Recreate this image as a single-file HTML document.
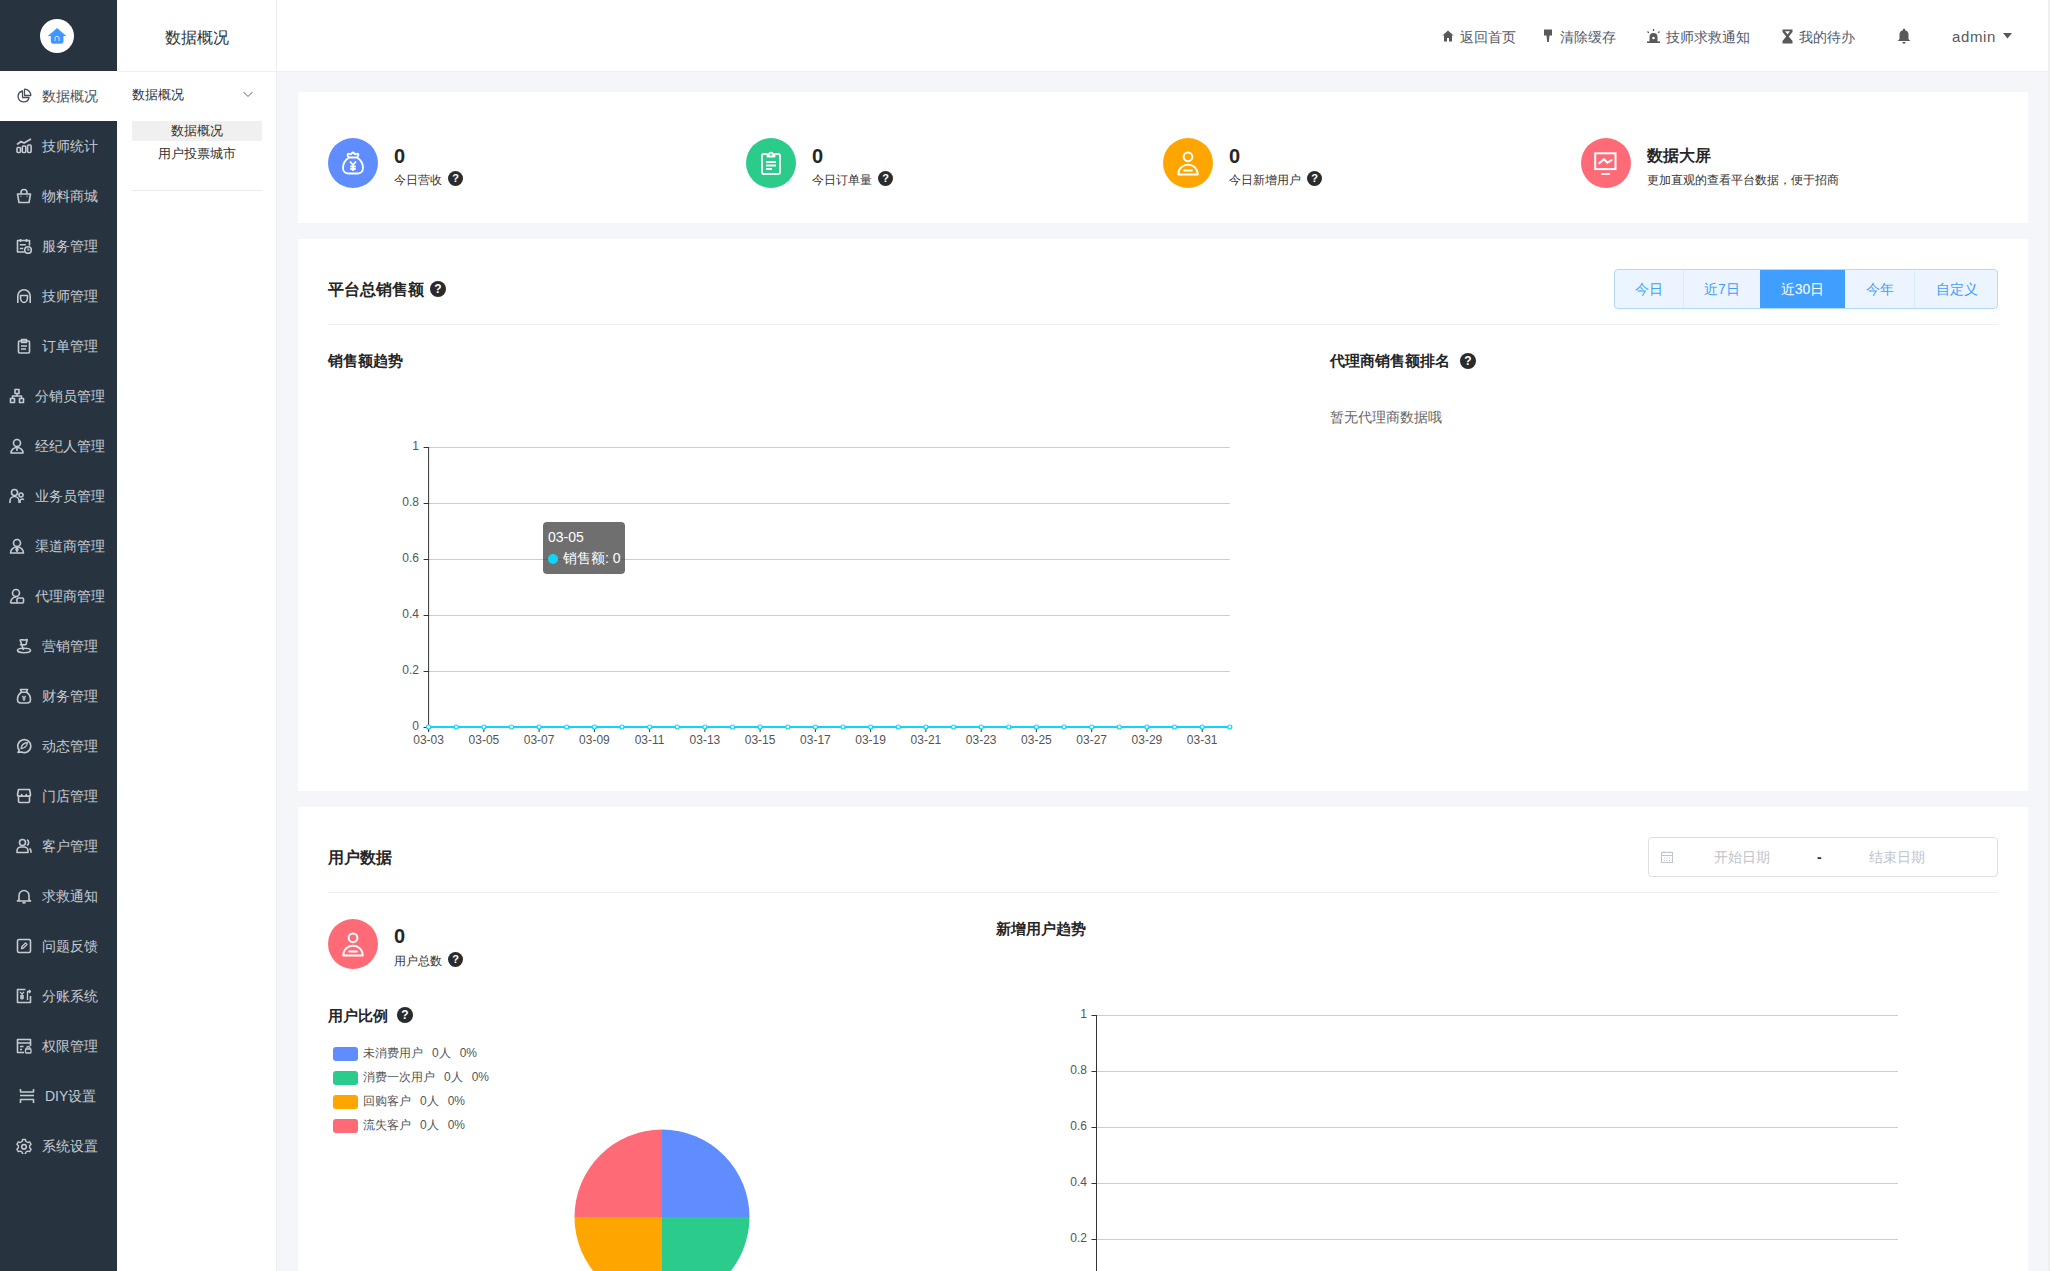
<!DOCTYPE html>
<html><head><meta charset="utf-8">
<style>
*{margin:0;padding:0;box-sizing:border-box}
html,body{width:2050px;height:1271px;overflow:hidden}
body{font-family:"Liberation Sans",sans-serif;background:#f5f6f9;position:relative;color:#303133}
.abs{position:absolute}
#side{left:0;top:0;width:117px;height:1271px;background:#273440}
#logo{left:40px;top:19px;width:34px;height:34px;border-radius:50%;background:#fff}
.mi{position:absolute;left:0;width:117px;height:50px;color:#c6cad1;font-size:14px;line-height:50px;white-space:nowrap}
.mi svg{position:absolute;top:17px;width:16px;height:16px}
.mi span{position:absolute;top:0}
.mi.on{background:#fff;color:#4a4f57}
#sub{left:117px;top:0;width:160px;height:1271px;background:#fff;border-right:1px solid #ededed}
#hdr{left:277px;top:0;width:1773px;height:72px;background:#fff;border-bottom:1px solid #efefef}
.card{position:absolute;left:298px;width:1730px;background:#fff}
.hi{position:absolute;top:28px;font-size:14px;color:#515a6e;line-height:18px;white-space:nowrap}
.hi svg{position:absolute}
.q{position:absolute;width:15px;height:15px;border-radius:50%;background:#2b2b2b;color:#fff;font-size:11px;font-weight:bold;line-height:15px;text-align:center}
.circ{position:absolute;width:50px;height:50px;border-radius:50%}
.num{position:absolute;font-size:20px;font-weight:bold;color:#262626;line-height:20px}
.lab{position:absolute;font-size:12px;color:#333;line-height:14px;white-space:nowrap}
.ttl{position:absolute;font-weight:bold;color:#262626;white-space:nowrap}
.yl{position:absolute;font-size:12px;color:#555;line-height:12px;text-align:right;width:40px}
.xl{position:absolute;font-size:12px;color:#555;line-height:12px;text-align:center;width:50px}
</style></head><body>

<div id="side" class="abs">
  <div id="logo" class="abs"><svg class="abs" style="left:8px;top:9px" width="19" height="16" viewBox="0 0 19 16"><path d="M9.1 0.2 0.2 7.9H3V13.5a2 2 0 0 0 2 2H13.2a2 2 0 0 0 2-2V7.9H18Z" fill="#3d97ff" stroke="#3d97ff" stroke-width="0.4" stroke-linejoin="round"/><path d="M7.1 13V10.3a2 2 0 0 1 4 0V13" fill="none" stroke="#d6e8ff" stroke-width="1"/></svg></div>
<div class="mi on" style="top:71px"><svg style="left:16px" viewBox="0 0 16 16" fill="none" stroke="currentColor" stroke-width="1.6" stroke-linejoin="round"><path d="M6.5 3A5.5 5.5 0 1 0 13 9.5H6.5Z" stroke-width="1.3"/><path d="M8.5 1.2V7.5h6.3A6.3 6.3 0 0 0 8.5 1.2Z" stroke-width="1.3"/></svg><span style="left:42px">数据概况</span></div>
<div class="mi" style="top:121px"><svg style="left:16px" viewBox="0 0 16 16" fill="none" stroke="currentColor" stroke-width="1.6" stroke-linejoin="round"><rect x="1" y="9.5" width="3.5" height="5" rx="1"/><rect x="6.3" y="8" width="3.5" height="6.5" rx="1"/><rect x="11.6" y="7" width="3.5" height="7.5" rx="1"/><path d="M1 6.5 5 3.5l3 1.5 7-4"/></svg><span style="left:42px">技师统计</span></div>
<div class="mi" style="top:171px"><svg style="left:16px" viewBox="0 0 16 16" fill="none" stroke="currentColor" stroke-width="1.6" stroke-linejoin="round"><path d="M1.5 6h13l-1.5 8.5H3Z"/><path d="M5 6V4.5a3 3 0 0 1 6 0V6"/><path d="M4.5 8.3h.8M10.7 8.3h.8"/></svg><span style="left:42px">物料商城</span></div>
<div class="mi" style="top:221px"><svg style="left:16px" viewBox="0 0 16 16" fill="none" stroke="currentColor" stroke-width="1.6" stroke-linejoin="round"><path d="M8.5 14H1.5V2.5h12v5"/><path d="M4.5 1v3M10.5 1v3M3.8 6.8h6M3.8 10.5h3.5"/><circle cx="12" cy="12" r="3.3"/><path d="M12 10.3V12h1.6" stroke-width="1.2"/></svg><span style="left:42px">服务管理</span></div>
<div class="mi" style="top:271px"><svg style="left:16px" viewBox="0 0 16 16" fill="none" stroke="currentColor" stroke-width="1.6" stroke-linejoin="round"><path d="M1.8 15V8a6.2 6.2 0 0 1 12.4 0v7"/><path d="M4.5 7.5h7v2a3.5 5 0 0 1-7 0Z"/></svg><span style="left:42px">技师管理</span></div>
<div class="mi" style="top:321px"><svg style="left:16px" viewBox="0 0 16 16" fill="none" stroke="currentColor" stroke-width="1.6" stroke-linejoin="round"><rect x="2.5" y="3" width="11" height="12" rx="1"/><path d="M5.5 1.5h5v3h-5z"/><path d="M5 8h6M5 11h5"/></svg><span style="left:42px">订单管理</span></div>
<div class="mi" style="top:371px"><svg style="left:9px" viewBox="0 0 16 16" fill="none" stroke="currentColor" stroke-width="1.6" stroke-linejoin="round"><rect x="6" y="1.5" width="4" height="4"/><rect x="1.5" y="10.5" width="4" height="4"/><rect x="10.5" y="10.5" width="4" height="4"/><path d="M8 5.5v2.5M3.5 10.5V8h9v2.5"/></svg><span style="left:35px">分销员管理</span></div>
<div class="mi" style="top:421px"><svg style="left:9px" viewBox="0 0 16 16" fill="none" stroke="currentColor" stroke-width="1.6" stroke-linejoin="round"><circle cx="8" cy="5" r="3.5"/><path d="M2 15c0-3 2.5-5.5 6-5.5s6 2.5 6 5.5Z"/><path d="M8 10v3"/></svg><span style="left:35px">经纪人管理</span></div>
<div class="mi" style="top:471px"><svg style="left:9px" viewBox="0 0 16 16" fill="none" stroke="currentColor" stroke-width="1.6" stroke-linejoin="round"><circle cx="5.5" cy="4.5" r="3"/><path d="M1 15v-2a4.5 4.5 0 0 1 9 0v2"/><circle cx="12" cy="7" r="2"/><path d="M11 15v-2.5a3 3 0 0 1 4-1"/></svg><span style="left:35px">业务员管理</span></div>
<div class="mi" style="top:521px"><svg style="left:9px" viewBox="0 0 16 16" fill="none" stroke="currentColor" stroke-width="1.6" stroke-linejoin="round"><circle cx="8" cy="5" r="3.5"/><path d="M1.5 15c0-3.5 3-6 6.5-6s6.5 2.5 6.5 6Z"/><path d="M8 9.5l1 2-1 2-1-2z"/></svg><span style="left:35px">渠道商管理</span></div>
<div class="mi" style="top:571px"><svg style="left:9px" viewBox="0 0 16 16" fill="none" stroke="currentColor" stroke-width="1.6" stroke-linejoin="round"><circle cx="7" cy="5" r="3.5"/><path d="M1.5 15c0-3.5 2.5-6 5.5-6"/><rect x="8" y="10" width="6.5" height="5" rx="1"/><path d="M1.5 15h7"/></svg><span style="left:35px">代理商管理</span></div>
<div class="mi" style="top:621px"><svg style="left:16px" viewBox="0 0 16 16" fill="none" stroke="currentColor" stroke-width="1.6" stroke-linejoin="round"><path d="M4 1.5 7.5 12"/><path d="M4.2 2c2-1 4 1 7-0.5l-1.2 5c-2.5 1.2-4.5-.5-6 .5"/><ellipse cx="8" cy="12.5" rx="6.5" ry="2.2"/></svg><span style="left:42px">营销管理</span></div>
<div class="mi" style="top:671px"><svg style="left:16px" viewBox="0 0 16 16" fill="none" stroke="currentColor" stroke-width="1.6" stroke-linejoin="round"><path d="M5.5 4.2 4.5 1.5h7l-1 2.7"/><path d="M5.5 4.2C2.5 6 1.5 9 1.5 11.5c0 2.3 1.3 3.5 3.5 3.5h6c2.2 0 3.5-1.2 3.5-3.5 0-2.5-1-5.5-4-7.3Z"/><path d="M6.3 8l1.7 2 1.7-2M8 10v3M6.5 11h3" stroke-width="1.2"/></svg><span style="left:42px">财务管理</span></div>
<div class="mi" style="top:721px"><svg style="left:16px" viewBox="0 0 16 16" fill="none" stroke="currentColor" stroke-width="1.6" stroke-linejoin="round"><path d="M3.3 12.3A6.5 6.5 0 1 1 5.5 14L2 14.5Z"/><path d="M5 10.5C5.5 7.2 7.8 5 11.5 4.5 11 8 8.5 10.2 5 10.5Z" stroke-width="1.3"/></svg><span style="left:42px">动态管理</span></div>
<div class="mi" style="top:771px"><svg style="left:16px" viewBox="0 0 16 16" fill="none" stroke="currentColor" stroke-width="1.6" stroke-linejoin="round"><path d="M2.5 7v6.3A1.2 1.2 0 0 0 3.7 14.5h8.6a1.2 1.2 0 0 0 1.2-1.2V7"/><path d="M1.5 6.5 2.5 1.5h11l1 5c0 1-.9 1.8-2.1 1.8s-2.1-.8-2.1-1.8c0 1-.9 1.8-2.3 1.8s-2.3-.8-2.3-1.8c0 1-.9 1.8-2.1 1.8S1.5 7.5 1.5 6.5Z"/></svg><span style="left:42px">门店管理</span></div>
<div class="mi" style="top:821px"><svg style="left:16px" viewBox="0 0 16 16" fill="none" stroke="currentColor" stroke-width="1.6" stroke-linejoin="round"><circle cx="6.5" cy="4.5" r="3"/><path d="M1 14.5v-1.5c0-2.2 1.8-4 4-4h3c2.2 0 4 1.8 4 4v1.5Z"/><path d="M11 1.8a3 3 0 0 1 0 5.4M13.5 10.5c1 .6 1.5 1.8 1.5 3v1.2"/></svg><span style="left:42px">客户管理</span></div>
<div class="mi" style="top:871px"><svg style="left:16px" viewBox="0 0 16 16" fill="none" stroke="currentColor" stroke-width="1.6" stroke-linejoin="round"><path d="M3 12V7.5a5 5 0 0 1 10 0V12l1.5 1H1.5Z"/><path d="M6.5 14.8h3"/></svg><span style="left:42px">求救通知</span></div>
<div class="mi" style="top:921px"><svg style="left:16px" viewBox="0 0 16 16" fill="none" stroke="currentColor" stroke-width="1.6" stroke-linejoin="round"><rect x="1.5" y="1.5" width="13" height="13" rx="1.5"/><path d="M5.5 10.5 6 8.5 9.5 5l1.5 1.5L7.5 10Z" stroke-width="1.3"/></svg><span style="left:42px">问题反馈</span></div>
<div class="mi" style="top:971px"><svg style="left:16px" viewBox="0 0 16 16" fill="none" stroke="currentColor" stroke-width="1.6" stroke-linejoin="round"><path d="M9.5 1.5h-8v13h13V8"/><path d="M4 3.8l2 2.4 2-2.4M6 6.2v5.5M4 8h4M4 10h4" stroke-width="1.3"/><path d="M11.5 12V3.5h3M13 2l1.5 1.5L13 5" stroke-width="1.3"/></svg><span style="left:42px">分账系统</span></div>
<div class="mi" style="top:1021px"><svg style="left:16px" viewBox="0 0 16 16" fill="none" stroke="currentColor" stroke-width="1.6" stroke-linejoin="round"><path d="M8 14.5H1.5v-13h13V8"/><path d="M1.5 5h13M4 8.5h3.5M4 11.5h2"/><rect x="9.5" y="11" width="5.5" height="4" rx=".8" stroke-width="1.3"/><path d="M10.8 11v-1a1.5 1.5 0 0 1 3 0v1" stroke-width="1.3"/></svg><span style="left:42px">权限管理</span></div>
<div class="mi" style="top:1071px"><svg style="left:19px" viewBox="0 0 16 16" fill="none" stroke="currentColor" stroke-width="1.6" stroke-linejoin="round"><path d="M1.5 1v3h13V1"/><path d="M1 7.5h14"/><path d="M1.5 15v-3.5h13V15"/></svg><span style="left:45px">DIY设置</span></div>
<div class="mi" style="top:1121px"><svg style="left:16px" viewBox="0 0 16 16" fill="none" stroke="currentColor" stroke-width="1.6" stroke-linejoin="round"><path d="M6.6 1.5h2.8l.5 2 1.8 1 2-.6 1.4 2.4-1.5 1.5v2l1.5 1.5-1.4 2.4-2-.6-1.8 1-.5 2H6.6l-.5-2-1.8-1-2 .6L.9 11.3l1.5-1.5v-2L.9 6.3l1.4-2.4 2 .6 1.8-1Z" stroke-width="1.4"/><circle cx="8" cy="8.8" r="2.3"/></svg><span style="left:42px">系统设置</span></div>
</div>
<div id="sub" class="abs">
  <div class="abs" style="left:0;top:0;width:159px;height:72px;border-bottom:1px solid #efefef;font-size:16px;line-height:76px;text-align:center;color:#303133">数据概况</div>
  <div class="abs" style="left:15px;top:86px;font-size:13px;line-height:18px;color:#303133">数据概况</div>
  <svg class="abs" style="left:126px;top:91px" width="10" height="7" viewBox="0 0 10 7"><path d="M0.5 1 5 5.5 9.5 1" fill="none" stroke="#606266" stroke-width="1"/></svg>
  <div class="abs" style="left:15px;top:121px;width:130px;height:20px;background:#f0f0f0;font-size:13px;line-height:20px;text-align:center;color:#303133">数据概况</div>
  <div class="abs" style="left:15px;top:144px;width:130px;height:20px;font-size:13px;line-height:20px;text-align:center;color:#303133">用户投票城市</div>
  <div class="abs" style="left:15px;top:190px;width:130px;height:1px;background:#e9ebef"></div>
</div>
<div id="hdr" class="abs">
  <svg class="abs" style="left:1165px;top:30px" width="12" height="12" viewBox="0 0 12 12"><path d="M6 0.5 0.5 5.5H2V11.5h3V8h2v3.5h3V5.5h1.5Z" fill="#595959"/></svg>
  <div class="hi" style="left:1183px">返回首页</div>
  <svg class="abs" style="left:1266px;top:29px" width="10" height="14" viewBox="0 0 10 14"><path d="M1 0.5h8v6H6.5L5.8 13H4.2L3.5 6.5H1Z" fill="#595959"/></svg>
  <div class="hi" style="left:1283px">清除缓存</div>
  <svg class="abs" style="left:1369px;top:29px" width="15" height="14" viewBox="0 0 15 14"><path d="M3.5 13V8a4 4 0 0 1 8 0v5Z" fill="#595959"/><path d="M1 13.2h13" stroke="#595959" stroke-width="1.6"/><circle cx="7.5" cy="9" r="1.3" fill="#fff"/><path d="M7.5 0v2M1.5 2.5l1.4 1.4M13.5 2.5l-1.4 1.4" stroke="#595959" stroke-width="1.3"/></svg>
  <div class="hi" style="left:1389px">技师求救通知</div>
  <svg class="abs" style="left:1505px;top:29px" width="11" height="15" viewBox="0 0 11 15"><path d="M0.5 0.5h10v2.5L6.8 7.5l3.7 4.5v2.5H0.5V12l3.7-4.5L0.5 3Z" fill="#595959"/><path d="M3 2.2h5L5.5 5.5Z" fill="#fff"/></svg>
  <div class="hi" style="left:1522px">我的待办</div>
  <svg class="abs" style="left:1620px;top:28px" width="14" height="16" viewBox="0 0 14 16"><path d="M7 0.5a1 1 0 0 1 1 1v.7a4.5 4.5 0 0 1 3.5 4.4v4.4l1.8 2H0.7l1.8-2V6.6A4.5 4.5 0 0 1 6 2.2v-.7a1 1 0 0 1 1-1Z" fill="#595959"/><path d="M5.3 14a1.7 1.7 0 0 0 3.4 0Z" fill="#595959"/></svg>
  <div class="hi" style="left:1675px;font-size:15px;color:#595959;letter-spacing:0.6px">admin</div>
  <svg class="abs" style="left:1726px;top:33px" width="9" height="6" viewBox="0 0 9 6"><path d="M0 0h9L4.5 5.5Z" fill="#595959"/></svg>
</div>

<div class="card" style="top:92px;height:131px">
  <div class="circ" style="left:30px;top:46px;background:#5f8cff"><svg class="abs" style="left:14px;top:12px" width="22" height="25" viewBox="0 0 22 25" fill="none" stroke="#fff" stroke-width="1.8" stroke-linejoin="round"><path d="M7.2 7.8C5.8 6.5 5 4.5 6 3.8c1-.6 2 .8 3 .4.8-.4 1-1.7 2-1.7s1.2 1.3 2 1.7c1 .4 2-1 3-.4 1 .7.2 2.7-1.2 4"/><path d="M7 7.5C3 10 1 14 1 18c0 3.5 2.5 5.5 5.5 5.5h9c3 0 5.5-2 5.5-5.5 0-4-2-8-6-10.5Z"/><path d="M8 11.5l3 3.5 3-3.5M11 15v6M8.3 16.5h5.4M8.3 19h5.4"/></svg></div>
  <div class="num" style="left:96px;top:54px">0</div>
  <div class="lab" style="left:96px;top:81px">今日营收</div>
  <div class="q" style="left:150px;top:79px">?</div>
  <div class="circ" style="left:448px;top:46px;background:#2bcc8b"><svg class="abs" style="left:15px;top:12px" width="20" height="25" viewBox="0 0 20 25" fill="none" stroke="#fff" stroke-width="1.8" stroke-linejoin="round"><path d="M6 4H2.5A1.5 1.5 0 0 0 1 5.5v17A1.5 1.5 0 0 0 2.5 24h15a1.5 1.5 0 0 0 1.5-1.5v-17A1.5 1.5 0 0 0 17.5 4H14"/><path d="M6.5 6.5h7V4.5h-1.7a1.8 1.8 0 0 0-3.6 0H6.5Z" fill="#2bcc8b"/><path d="M5 12h10M5 15.5h10M5 19h6"/></svg></div>
  <div class="num" style="left:514px;top:54px">0</div>
  <div class="lab" style="left:514px;top:81px">今日订单量</div>
  <div class="q" style="left:580px;top:79px">?</div>
  <div class="circ" style="left:865px;top:46px;background:#ffa500"><svg class="abs" style="left:13px;top:13px" width="24" height="25" viewBox="0 0 24 25" fill="none" stroke="#fff" stroke-width="2" stroke-linejoin="round"><circle cx="12" cy="5.8" r="4.4"/><path d="M2.3 23.5c0-6 4.3-9.8 9.7-9.8s9.7 3.8 9.7 9.8Z"/><path d="M8.3 19.5h7.4" stroke-width="2.2" stroke-linecap="round"/></svg></div>
  <div class="num" style="left:931px;top:54px">0</div>
  <div class="lab" style="left:931px;top:81px">今日新增用户</div>
  <div class="q" style="left:1009px;top:79px">?</div>
  <div class="circ" style="left:1283px;top:46px;background:#fe6b77"><svg class="abs" style="left:12px;top:13px" width="26" height="25" viewBox="0 0 26 25" fill="none" stroke="#fff" stroke-width="2" stroke-linejoin="miter"><rect x="2.2" y="2.3" width="20.3" height="15.8"/><path d="M6.2 12.1 11 8.2l3.4 3.5 4.1-2.6" stroke-linecap="round"/><path d="M8.2 23h8.8" stroke-width="1.8"/></svg></div>
  <div class="ttl" style="left:1349px;top:55px;font-size:16px;line-height:18px">数据大屏</div>
  <div class="lab" style="left:1349px;top:81px">更加直观的查看平台数据，便于招商</div>
</div>
<div class="card" style="top:239px;height:552px">
<div class="ttl" style="left:30px;top:41px;font-size:16px;line-height:20px">平台总销售额</div>
<div class="q" style="left:132px;top:42px;width:16px;height:16px;line-height:16px;font-size:12px">?</div>
<div class="abs" style="left:1316px;top:30px;width:384px;height:40px;border:1px solid #b3d8ff;border-radius:4px;background:#ecf5ff;overflow:hidden"><div class="abs" style="left:0px;top:0;width:68px;height:38px;color:#409eff;font-size:14px;line-height:38px;text-align:center">今日</div><div class="abs" style="left:68px;top:0;width:77px;height:38px;border-left:1px solid #d9ecff;color:#409eff;font-size:14px;line-height:38px;text-align:center">近7日</div><div class="abs" style="left:145px;top:-1px;width:85px;height:40px;background:#409eff;color:#fff;font-size:14px;line-height:40px;text-align:center">近30日</div><div class="abs" style="left:230px;top:0;width:69px;height:38px;color:#409eff;font-size:14px;line-height:38px;text-align:center">今年</div><div class="abs" style="left:299px;top:0;width:84px;height:38px;border-left:1px solid #d9ecff;color:#409eff;font-size:14px;line-height:38px;text-align:center">自定义</div></div>
<div class="abs" style="left:30px;top:85px;width:1670px;height:1px;background:#eeeeee"></div>
<div class="ttl" style="left:30px;top:113px;font-size:15px;line-height:18px">销售额趋势</div>
<div class="ttl" style="left:1032px;top:113px;font-size:15px;line-height:18px">代理商销售额排名</div>
<div class="q" style="left:1162px;top:114px;width:16px;height:16px;line-height:16px;font-size:12px">?</div>
<div class="abs" style="left:1032px;top:169px;font-size:14px;line-height:18px;color:#666">暂无代理商数据哦</div>
<svg class="abs" style="left:0;top:0" width="1730" height="552" viewBox="298 239 1730 552"><path d="M428.6 671.5H1229.8" stroke="#cccccc" stroke-width="1"/><path d="M428.6 615.5H1229.8" stroke="#cccccc" stroke-width="1"/><path d="M428.6 559.5H1229.8" stroke="#cccccc" stroke-width="1"/><path d="M428.6 503.5H1229.8" stroke="#cccccc" stroke-width="1"/><path d="M428.6 447.5H1229.8" stroke="#cccccc" stroke-width="1"/><path d="M428.6 447V731" stroke="#333" stroke-width="1"/><path d="M423.6 727.5H428.6" stroke="#333" stroke-width="1"/><path d="M423.6 671.5H428.6" stroke="#333" stroke-width="1"/><path d="M423.6 615.5H428.6" stroke="#333" stroke-width="1"/><path d="M423.6 559.5H428.6" stroke="#333" stroke-width="1"/><path d="M423.6 503.5H428.6" stroke="#333" stroke-width="1"/><path d="M423.6 447.5H428.6" stroke="#333" stroke-width="1"/><path d="M428.6 727H1229.8" stroke="#333" stroke-width="1"/><path d="M428.6 727V732" stroke="#333" stroke-width="1"/><path d="M483.9 727V732" stroke="#333" stroke-width="1"/><path d="M539.1 727V732" stroke="#333" stroke-width="1"/><path d="M594.4 727V732" stroke="#333" stroke-width="1"/><path d="M649.6 727V732" stroke="#333" stroke-width="1"/><path d="M704.9 727V732" stroke="#333" stroke-width="1"/><path d="M760.1 727V732" stroke="#333" stroke-width="1"/><path d="M815.4 727V732" stroke="#333" stroke-width="1"/><path d="M870.6 727V732" stroke="#333" stroke-width="1"/><path d="M925.9 727V732" stroke="#333" stroke-width="1"/><path d="M981.2 727V732" stroke="#333" stroke-width="1"/><path d="M1036.4 727V732" stroke="#333" stroke-width="1"/><path d="M1091.7 727V732" stroke="#333" stroke-width="1"/><path d="M1146.9 727V732" stroke="#333" stroke-width="1"/><path d="M1202.2 727V732" stroke="#333" stroke-width="1"/><path d="M428.6 727H1229.8" stroke="#10d4fb" stroke-width="2.2"/><circle cx="428.6" cy="727" r="2" fill="#fff" stroke="#10d4fb" stroke-width="1.2"/><circle cx="456.2" cy="727" r="2" fill="#fff" stroke="#10d4fb" stroke-width="1.2"/><circle cx="483.9" cy="727" r="2" fill="#fff" stroke="#10d4fb" stroke-width="1.2"/><circle cx="511.5" cy="727" r="2" fill="#fff" stroke="#10d4fb" stroke-width="1.2"/><circle cx="539.1" cy="727" r="2" fill="#fff" stroke="#10d4fb" stroke-width="1.2"/><circle cx="566.7" cy="727" r="2" fill="#fff" stroke="#10d4fb" stroke-width="1.2"/><circle cx="594.4" cy="727" r="2" fill="#fff" stroke="#10d4fb" stroke-width="1.2"/><circle cx="622.0" cy="727" r="2" fill="#fff" stroke="#10d4fb" stroke-width="1.2"/><circle cx="649.6" cy="727" r="2" fill="#fff" stroke="#10d4fb" stroke-width="1.2"/><circle cx="677.2" cy="727" r="2" fill="#fff" stroke="#10d4fb" stroke-width="1.2"/><circle cx="704.9" cy="727" r="2" fill="#fff" stroke="#10d4fb" stroke-width="1.2"/><circle cx="732.5" cy="727" r="2" fill="#fff" stroke="#10d4fb" stroke-width="1.2"/><circle cx="760.1" cy="727" r="2" fill="#fff" stroke="#10d4fb" stroke-width="1.2"/><circle cx="787.8" cy="727" r="2" fill="#fff" stroke="#10d4fb" stroke-width="1.2"/><circle cx="815.4" cy="727" r="2" fill="#fff" stroke="#10d4fb" stroke-width="1.2"/><circle cx="843.0" cy="727" r="2" fill="#fff" stroke="#10d4fb" stroke-width="1.2"/><circle cx="870.6" cy="727" r="2" fill="#fff" stroke="#10d4fb" stroke-width="1.2"/><circle cx="898.3" cy="727" r="2" fill="#fff" stroke="#10d4fb" stroke-width="1.2"/><circle cx="925.9" cy="727" r="2" fill="#fff" stroke="#10d4fb" stroke-width="1.2"/><circle cx="953.5" cy="727" r="2" fill="#fff" stroke="#10d4fb" stroke-width="1.2"/><circle cx="981.2" cy="727" r="2" fill="#fff" stroke="#10d4fb" stroke-width="1.2"/><circle cx="1008.8" cy="727" r="2" fill="#fff" stroke="#10d4fb" stroke-width="1.2"/><circle cx="1036.4" cy="727" r="2" fill="#fff" stroke="#10d4fb" stroke-width="1.2"/><circle cx="1064.0" cy="727" r="2" fill="#fff" stroke="#10d4fb" stroke-width="1.2"/><circle cx="1091.7" cy="727" r="2" fill="#fff" stroke="#10d4fb" stroke-width="1.2"/><circle cx="1119.3" cy="727" r="2" fill="#fff" stroke="#10d4fb" stroke-width="1.2"/><circle cx="1146.9" cy="727" r="2" fill="#fff" stroke="#10d4fb" stroke-width="1.2"/><circle cx="1174.5" cy="727" r="2" fill="#fff" stroke="#10d4fb" stroke-width="1.2"/><circle cx="1202.2" cy="727" r="2" fill="#fff" stroke="#10d4fb" stroke-width="1.2"/><circle cx="1229.8" cy="727" r="2" fill="#fff" stroke="#10d4fb" stroke-width="1.2"/><text x="419" y="730" text-anchor="end" font-size="12" fill="#555">0</text><text x="419" y="674" text-anchor="end" font-size="12" fill="#555">0.2</text><text x="419" y="618" text-anchor="end" font-size="12" fill="#555">0.4</text><text x="419" y="562" text-anchor="end" font-size="12" fill="#555">0.6</text><text x="419" y="506" text-anchor="end" font-size="12" fill="#555">0.8</text><text x="419" y="450" text-anchor="end" font-size="12" fill="#555">1</text><text x="428.6" y="744" text-anchor="middle" font-size="12" fill="#555">03-03</text><text x="483.9" y="744" text-anchor="middle" font-size="12" fill="#555">03-05</text><text x="539.1" y="744" text-anchor="middle" font-size="12" fill="#555">03-07</text><text x="594.4" y="744" text-anchor="middle" font-size="12" fill="#555">03-09</text><text x="649.6" y="744" text-anchor="middle" font-size="12" fill="#555">03-11</text><text x="704.9" y="744" text-anchor="middle" font-size="12" fill="#555">03-13</text><text x="760.1" y="744" text-anchor="middle" font-size="12" fill="#555">03-15</text><text x="815.4" y="744" text-anchor="middle" font-size="12" fill="#555">03-17</text><text x="870.6" y="744" text-anchor="middle" font-size="12" fill="#555">03-19</text><text x="925.9" y="744" text-anchor="middle" font-size="12" fill="#555">03-21</text><text x="981.2" y="744" text-anchor="middle" font-size="12" fill="#555">03-23</text><text x="1036.4" y="744" text-anchor="middle" font-size="12" fill="#555">03-25</text><text x="1091.7" y="744" text-anchor="middle" font-size="12" fill="#555">03-27</text><text x="1146.9" y="744" text-anchor="middle" font-size="12" fill="#555">03-29</text><text x="1202.2" y="744" text-anchor="middle" font-size="12" fill="#555">03-31</text></svg>
<div class="abs" style="left:245px;top:283px;width:82px;height:52px;background:rgba(50,50,50,0.7);border-radius:4px;color:#fff;font-size:14px;line-height:21px;padding:5px 0 0 5px;white-space:nowrap">03-05<br><span style="display:inline-block;width:10px;height:10px;border-radius:50%;background:#10d4fb;margin-right:5px;vertical-align:-1px"></span>销售额: 0</div>
</div>
<div class="card" style="top:807px;height:480px;overflow:hidden">
<div class="ttl" style="left:30px;top:41px;font-size:16px;line-height:20px">用户数据</div>
<div class="abs" style="left:1350px;top:30px;width:350px;height:40px;border:1px solid #dcdfe6;border-radius:4px;background:#fff">
<svg class="abs" style="left:11px;top:12px" width="14" height="14" viewBox="0 0 14 14" fill="none" stroke="#c0c4cc" stroke-width="1"><rect x="1.5" y="2.5" width="11" height="10"/><path d="M1.5 5.5h11M4 1v2M10 1v2M4 8h1M6.5 8h1M9 8h1M4 10.5h1M6.5 10.5h1M9 10.5h1"/></svg>
<div class="abs" style="left:65px;top:0;font-size:14px;line-height:38px;color:#c0c4cc">开始日期</div>
<div class="abs" style="left:168px;top:0;font-size:14px;line-height:38px;color:#303133;font-weight:bold">-</div>
<div class="abs" style="left:220px;top:0;font-size:14px;line-height:38px;color:#c0c4cc">结束日期</div>
</div>
<div class="abs" style="left:30px;top:85px;width:1670px;height:1px;background:#eeeeee"></div>
<div class="circ" style="left:30px;top:112px;background:#fe6b77"><svg class="abs" style="left:13px;top:13px" width="24" height="25" viewBox="0 0 24 25" fill="none" stroke="#fff" stroke-width="2" stroke-linejoin="round"><circle cx="12" cy="5.8" r="4.4"/><path d="M2.3 23.5c0-6 4.3-9.8 9.7-9.8s9.7 3.8 9.7 9.8Z"/><path d="M8.3 19.5h7.4" stroke-width="2.2" stroke-linecap="round"/></svg></div>
<div class="num" style="left:96px;top:119px">0</div>
<div class="lab" style="left:96px;top:147px">用户总数</div>
<div class="q" style="left:150px;top:145px">?</div>
<div class="ttl" style="left:698px;top:113px;font-size:15px;line-height:18px">新增用户趋势</div>
<div class="ttl" style="left:30px;top:200px;font-size:15px;line-height:18px">用户比例</div>
<div class="q" style="left:99px;top:200px;width:16px;height:16px;line-height:16px;font-size:12px">?</div>
<div class="abs" style="left:35px;top:240px;width:25px;height:14px;border-radius:3px;background:#5f8dff"></div>
<div class="abs" style="left:65px;top:238px;font-size:12px;line-height:16px;color:#555;white-space:nowrap">未消费用户<span style="margin-left:9px">0人</span><span style="margin-left:9px">0%</span></div>
<div class="abs" style="left:35px;top:264px;width:25px;height:14px;border-radius:3px;background:#2bcc8b"></div>
<div class="abs" style="left:65px;top:262px;font-size:12px;line-height:16px;color:#555;white-space:nowrap">消费一次用户<span style="margin-left:9px">0人</span><span style="margin-left:9px">0%</span></div>
<div class="abs" style="left:35px;top:288px;width:25px;height:14px;border-radius:3px;background:#ffa500"></div>
<div class="abs" style="left:65px;top:286px;font-size:12px;line-height:16px;color:#555;white-space:nowrap">回购客户<span style="margin-left:9px">0人</span><span style="margin-left:9px">0%</span></div>
<div class="abs" style="left:35px;top:312px;width:25px;height:14px;border-radius:3px;background:#fe6b77"></div>
<div class="abs" style="left:65px;top:310px;font-size:12px;line-height:16px;color:#555;white-space:nowrap">流失客户<span style="margin-left:9px">0人</span><span style="margin-left:9px">0%</span></div>
<svg class="abs" style="left:0;top:0" width="1730" height="480" viewBox="298 807 1730 480"><path d="M662 1217V1129.5A87.5 87.5 0 0 1 749.5 1217Z" fill="#5f8dff"/><path d="M662 1217H749.5A87.5 87.5 0 0 1 662 1304.5Z" fill="#2bcc8b"/><path d="M662 1217V1304.5A87.5 87.5 0 0 1 574.5 1217Z" fill="#ffa500"/><path d="M662 1217H574.5A87.5 87.5 0 0 1 662 1129.5Z" fill="#fe6b77"/><path d="M1096.5 1015.5H1898" stroke="#cccccc" stroke-width="1"/><path d="M1091.5 1015.5H1096.5" stroke="#333" stroke-width="1"/><path d="M1096.5 1071.5H1898" stroke="#cccccc" stroke-width="1"/><path d="M1091.5 1071.5H1096.5" stroke="#333" stroke-width="1"/><path d="M1096.5 1127.5H1898" stroke="#cccccc" stroke-width="1"/><path d="M1091.5 1127.5H1096.5" stroke="#333" stroke-width="1"/><path d="M1096.5 1183.5H1898" stroke="#cccccc" stroke-width="1"/><path d="M1091.5 1183.5H1096.5" stroke="#333" stroke-width="1"/><path d="M1096.5 1239.5H1898" stroke="#cccccc" stroke-width="1"/><path d="M1091.5 1239.5H1096.5" stroke="#333" stroke-width="1"/><path d="M1096.5 1295.5H1898" stroke="#cccccc" stroke-width="1"/><path d="M1091.5 1295.5H1096.5" stroke="#333" stroke-width="1"/><path d="M1096.5 1015V1300" stroke="#333" stroke-width="1"/><text x="1087" y="1018" text-anchor="end" font-size="12" fill="#555">1</text><text x="1087" y="1074" text-anchor="end" font-size="12" fill="#555">0.8</text><text x="1087" y="1130" text-anchor="end" font-size="12" fill="#555">0.6</text><text x="1087" y="1186" text-anchor="end" font-size="12" fill="#555">0.4</text><text x="1087" y="1242" text-anchor="end" font-size="12" fill="#555">0.2</text><text x="1087" y="1298" text-anchor="end" font-size="12" fill="#555">0</text></svg>
</div>

<div class="abs" style="left:2048px;top:0;width:2px;height:1271px;background:#efefef"></div>
</body></html>
